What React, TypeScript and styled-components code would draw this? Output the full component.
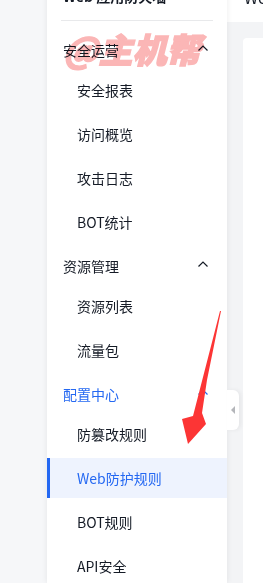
import React from 'react'
import styled, { createGlobalStyle } from 'styled-components'

const GlobalStyle = createGlobalStyle`
  html, body {
    margin: 0;
    padding: 0;
    background: #f5f6f8;
    overflow: hidden;
  }
  body {
    font-family: "Noto Sans CJK SC", "Noto Sans", sans-serif;
    color: #151b26;
  }
  * {
    box-sizing: border-box;
  }
`

type MenuGroup = {
  title: string
  active?: boolean
  items: string[]
}

const groups: MenuGroup[] = [
  { title: '安全运营', items: ['安全报表', '访问概览', '攻击日志', 'BOT统计'] },
  { title: '资源管理', items: ['资源列表', '流量包'] },
  {
    title: '配置中心',
    active: true,
    items: ['防篡改规则', 'Web防护规则', 'BOT规则', 'API安全'],
  },
]

const selectedItem = 'Web防护规则'

const Chevron = ({ color }: { color: string }) => (
  <ChevronIcon width="12" height="12" viewBox="0 0 12 12">
    <path
      d="M1.5 7.5 L6 3 L10.5 7.5"
      fill="none"
      stroke={color}
      strokeWidth="1.2"
    />
  </ChevronIcon>
)

const Arrow = () => (
  <ArrowMark width="45" height="140" viewBox="0 0 45 140">
    <polygon
      points="41,3 27,72 22,105 26,116 8,136 2,111 13,108 40,3"
      fill="#fc3535"
    />
  </ArrowMark>
)

export default function App() {
  return (
    <>
      <GlobalStyle />
      <Page>
        <Rail />
        <Sidebar>
          <Title>Web 应用防火墙</Title>
          <Divider />
          <Menu>
            {groups.map(group => (
              <Group key={group.title}>
                <GroupHeader $active={group.active}>
                  <span>{group.title}</span>
                  <Chevron color={group.active ? '#2468f2' : '#151b26'} />
                </GroupHeader>
                {group.items.map(item => (
                  <MenuItem key={item} $selected={item === selectedItem}>
                    {item}
                  </MenuItem>
                ))}
              </Group>
            ))}
          </Menu>
          <CollapseTab>
            <TabArrow />
          </CollapseTab>
        </Sidebar>
        <Main>
          <MainHeader>Web防护规则</MainHeader>
          <Content>
            <Card />
          </Content>
        </Main>
      </Page>
      <Watermark>@主机帮</Watermark>
      <Arrow />
    </>
  )
}

const Page = styled.div`
  display: flex;
  height: 603px;
  margin-top: -20px;
`

const Rail = styled.div`
  width: 47px;
  flex-shrink: 0;
  background: #f6f7f9;
`

const Sidebar = styled.aside`
  position: relative;
  z-index: 2;
  width: 180px;
  flex-shrink: 0;
  background: #fff;
  box-shadow: 0 0 6px rgba(0, 0, 0, 0.08);
`

const Title = styled.div`
  height: 40px;
  padding: 0 16px 8px;
  display: flex;
  align-items: center;
  font-size: 14px;
  font-weight: 600;
  white-space: nowrap;
`

const Divider = styled.div`
  height: 1px;
  margin: 0 14px;
  background: #e8e9eb;
`

const Menu = styled.nav`
  padding-top: 9px;
`

const Group = styled.div`
  display: flex;
  flex-direction: column;
`

const GroupHeader = styled.div<{ $active?: boolean }>`
  height: 40px;
  padding: 0 18px 0 16px;
  display: flex;
  align-items: center;
  justify-content: space-between;
  font-size: 14px;
  color: ${p => (p.$active ? '#2468f2' : '#151b26')};
`

const ChevronIcon = styled.svg`
  margin-bottom: 3px;
`

const MenuItem = styled.div<{ $selected?: boolean }>`
  height: 40px;
  margin-bottom: 4px;
  padding-left: 30px;
  display: flex;
  align-items: center;
  font-size: 14px;
  color: ${p => (p.$selected ? '#2468f2' : '#151b26')};
  background: ${p => (p.$selected ? '#eef3fe' : 'transparent')};
  box-shadow: ${p => (p.$selected ? 'inset 3px 0 0 #2468f2' : 'none')};
`

const CollapseTab = styled.div`
  position: absolute;
  top: 410px;
  right: -12px;
  width: 12px;
  height: 40px;
  background: #fff;
  border-radius: 0 6px 6px 0;
  box-shadow: 2px 0 4px rgba(0, 0, 0, 0.06);
  display: flex;
  align-items: center;
  justify-content: center;
`

const TabArrow = styled.span`
  width: 0;
  height: 0;
  border-top: 4px solid transparent;
  border-bottom: 4px solid transparent;
  border-right: 4px solid #b4b6ba;
`

const Main = styled.main`
  flex: 1;
  min-width: 0;
  display: flex;
  flex-direction: column;
  background: #f3f4f6;
`

const MainHeader = styled.div`
  height: 42px;
  flex-shrink: 0;
  padding: 5px 0 0 17px;
  background: #fff;
  font-size: 16px;
  line-height: 24px;
  white-space: nowrap;
  overflow: hidden;
`

const Content = styled.div`
  flex: 1;
  display: flex;
  padding: 16px 0 0 16px;
`

const Card = styled.div`
  flex: 1;
  background: #fff;
  border-radius: 4px 0 0 0;
`

const Watermark = styled.div`
  position: absolute;
  left: 63px;
  top: 30px;
  z-index: 5;
  font-size: 34px;
  line-height: 38px;
  font-weight: 900;
  font-style: italic;
  color: #fbb6b6;
  -webkit-text-stroke: 1.4px #fbb6b6;
  mix-blend-mode: multiply;
  white-space: nowrap;
  pointer-events: none;
`

const ArrowMark = styled.svg`
  position: absolute;
  left: 180px;
  top: 308px;
  z-index: 5;
  pointer-events: none;
`
